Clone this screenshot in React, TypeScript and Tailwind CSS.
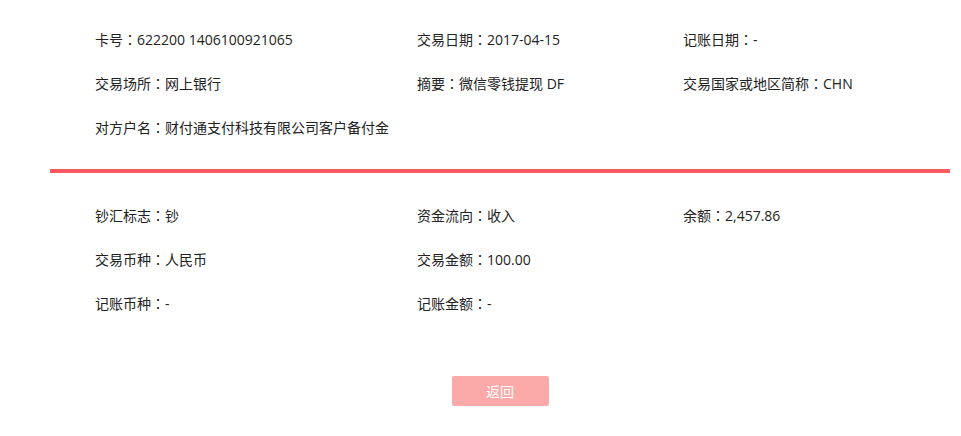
import React from "react";

const font = { fontFamily: '"Open Sans", "Noto Sans CJK SC", sans-serif' };

function Text({ s }: { s: string }) {
  const i = s.indexOf("：");
  if (i < 0) return <>{s}</>;
  return (
    <>
      {s.slice(0, i)}
      <span style={{ fontFamily: '"Noto Sans CJK TC", sans-serif' }}>：</span>
      {s.slice(i + 1)}
    </>
  );
}

function Row({ cells }: { cells: string[] }) {
  return (
    <div className="flex h-[44px] items-center text-[14px] text-[#222]">
      <div className="w-[322px] shrink-0 whitespace-nowrap">{cells[0] ? <Text s={cells[0]} /> : null}</div>
      <div className="w-[266px] shrink-0 whitespace-nowrap">{cells[1] ? <Text s={cells[1]} /> : null}</div>
      <div className="whitespace-nowrap">{cells[2] ? <Text s={cells[2]} /> : null}</div>
    </div>
  );
}

export default function App() {
  return (
    <div className="w-[961px] h-[436px] bg-white" style={font}>
      <div className="mx-[50px] w-[900px]">
        <div className="pl-[45px] pt-[17px] pb-[20px]">
          <Row cells={["卡号：622200 1406100921065", "交易日期：2017-04-15", "记账日期：-"]} />
          <Row cells={["交易场所：网上银行", "摘要：微信零钱提现 DF", "交易国家或地区简称：CHN"]} />
          <Row cells={["对方户名：财付通支付科技有限公司客户备付金"]} />
        </div>
        <div className="h-[4px] bg-[#ff5a5f]" />
        <div className="pl-[45px] pt-[20px]">
          <Row cells={["钞汇标志：钞", "资金流向：收入", "余额：2,457.86"]} />
          <Row cells={["交易币种：人民币", "交易金额：100.00"]} />
          <Row cells={["记账币种：-", "记账金额：-"]} />
        </div>
        <div className="flex justify-center pt-[51px]">
          <button className="h-[30px] w-[97px] rounded-[2px] bg-[#fca9aa] text-[14px] text-white">
            返回
          </button>
        </div>
      </div>
    </div>
  );
}
